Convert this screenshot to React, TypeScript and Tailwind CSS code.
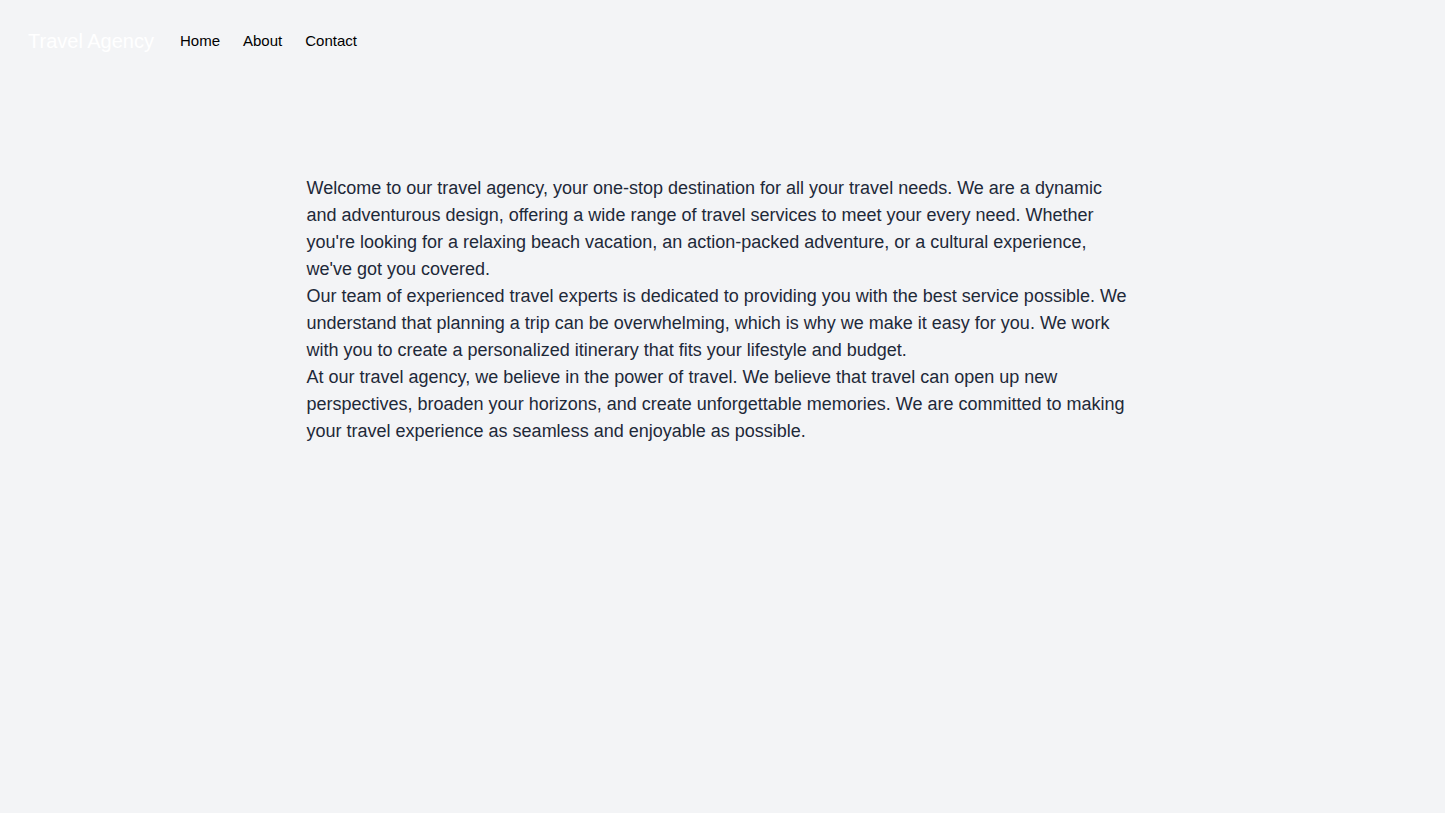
import React from "react";

export default function App() {
  return (
    <div className="min-h-screen bg-gray-100 font-['Liberation_Sans',Arial,sans-serif]">
      <nav className="flex items-center pl-7 pr-6 pt-[27px] pb-6">
        <span className="text-xl leading-7 text-white mr-[26px]">Travel Agency</span>
        <div className="flex gap-[23px] text-[15px] leading-[22px] text-black">
          <a href="#">Home</a>
          <a href="#">About</a>
          <a href="#">Contact</a>
        </div>
      </nav>
      <main className="mx-auto max-w-4xl px-8 pt-24">
        <div className="max-w-[826px] text-lg leading-[27px] text-gray-800">
          <p>
            Welcome to our travel agency, your one-stop destination for all your travel needs. We are a dynamic and adventurous design, offering a wide range of travel services to meet your every need. Whether you're looking for a relaxing beach vacation, an action-packed adventure, or a cultural experience, we've got you covered.
          </p>
          <p>
            Our team of experienced travel experts is dedicated to providing you with the best service possible. We understand that planning a trip can be overwhelming, which is why we make it easy for you. We work with you to create a personalized itinerary that fits your lifestyle and budget.
          </p>
          <p>
            At our travel agency, we believe in the power of travel. We believe that travel can open up new perspectives, broaden your horizons, and create unforgettable memories. We are committed to making your travel experience as seamless and enjoyable as possible.
          </p>
        </div>
      </main>
    </div>
  );
}
